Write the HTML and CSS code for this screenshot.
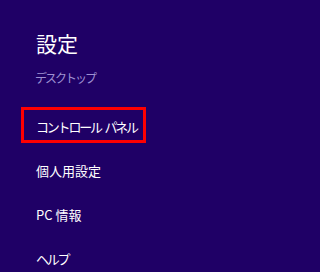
FILE: index.html
```html
<!DOCTYPE html>
<html lang="ja">
<head>
<meta charset="utf-8">
<link rel="stylesheet" href="styles.css">
</head>
<body>
<div class="charm">
  <h1 class="title">設定</h1>
  <div class="context">デスクトップ</div>
  <ul class="menu">
    <li class="item selected kana">コントロール パネル</li>
    <li class="item">個人用設定</li>
    <li class="item">PC 情報</li>
    <li class="item kana">ヘルプ</li>
  </ul>
</div>
</body>
</html>
```

FILE: styles.css
```css
html, body {
  margin: 0;
  padding: 0;
  background: #1f0066;
}
body {
  width: 300px;
  height: 272px;
  overflow: hidden;
  font-family: "Noto Sans CJK JP", "Noto Sans", sans-serif;
  color: #ffffff;
}
.charm {
  padding: 31px 0 0 21px;
}
.title {
  margin: 0 0 0 15px;
  font-size: 21px;
  line-height: 24px;
  font-weight: normal;
}
.context {
  margin: 15px 0 0 14px;
  font-size: 12px;
  line-height: 16px;
  letter-spacing: -2px;
  color: #9e90d2;
  white-space: nowrap;
}
.menu {
  list-style: none;
  margin: 21px 0 0 0;
  padding: 0;
  display: flex;
  flex-direction: column;
  gap: 8px;
}
.item {
  height: 36px;
  box-sizing: border-box;
  display: flex;
  align-items: center;
  padding: 2px 0 0 15px;
  font-size: 13px;
  white-space: pre;
}
.item.kana {
  letter-spacing: -2.2px;
  word-spacing: 3px;
}
.item.selected {
  width: 125px;
  border: 3px solid #ff0000;
  padding-left: 12px;
}
```
